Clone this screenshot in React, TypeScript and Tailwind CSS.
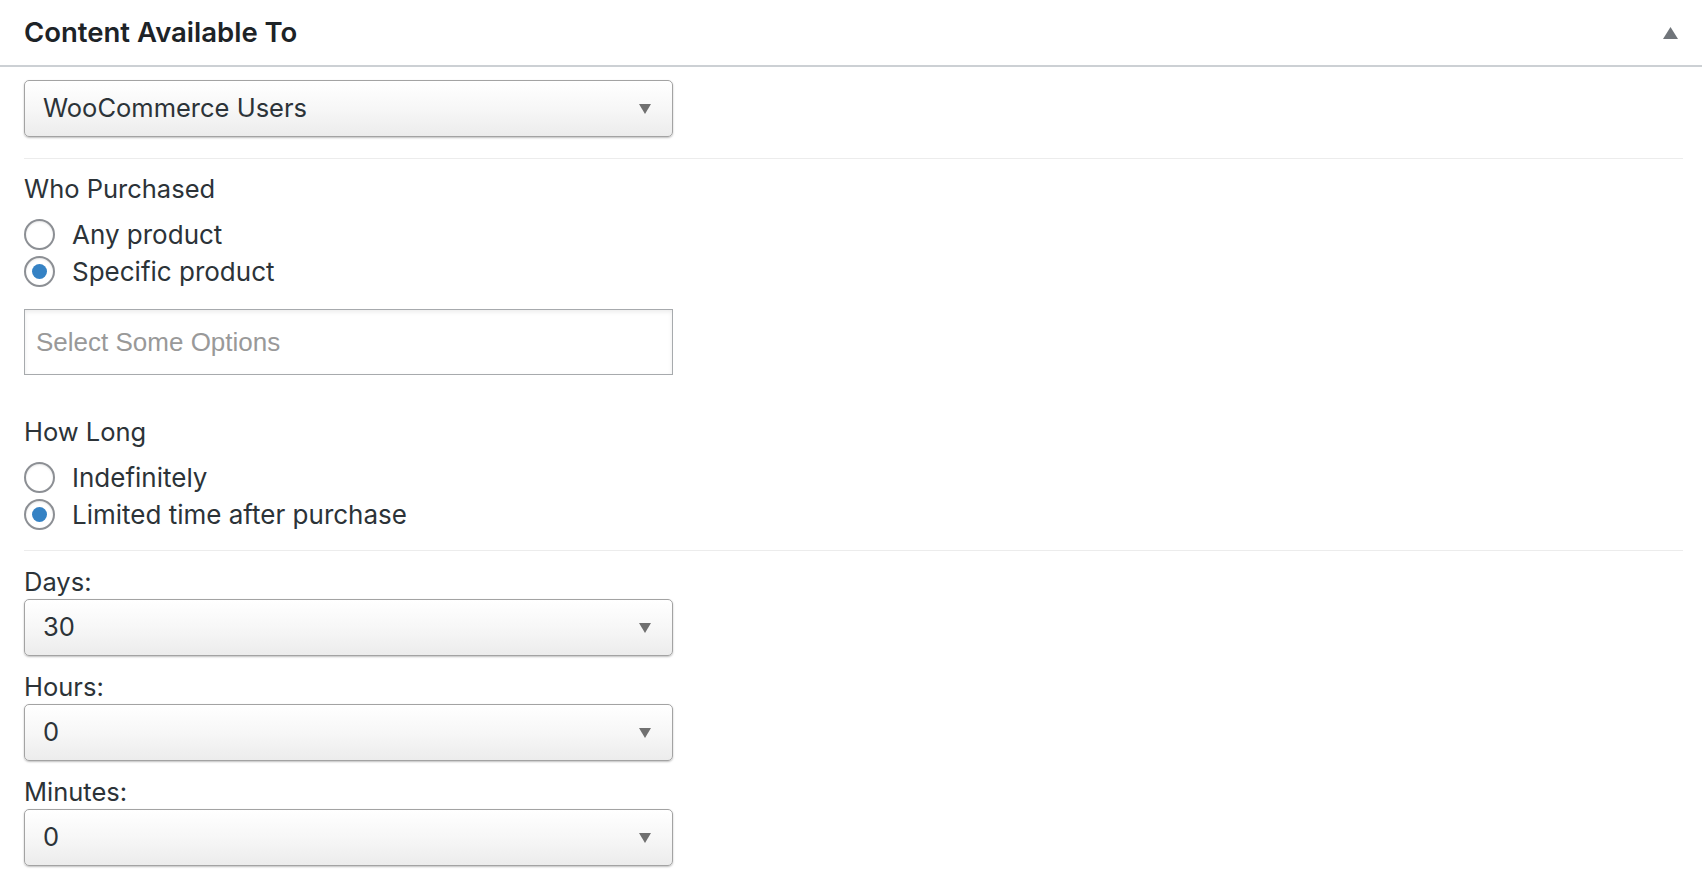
import React, { useState } from 'react';

const bodyFont = { fontFamily: 'Inter, "Noto Sans", sans-serif' };

const SelectBox: React.FC<{ value: string }> = ({ value }) => (
  <div className="relative flex h-[57px] w-[649px] items-center rounded-[5px] border border-[#a3a3a3] bg-gradient-to-b from-white via-[#f7f7f7] to-[#ececec] pl-[18px] pr-[21px] shadow-[0_1px_2px_rgba(0,0,0,0.25)]">
    <span className="flex-1 text-[25.5px] text-[#2c3338]">{value}</span>
    <svg width="12" height="10" viewBox="0 0 12 10" className="shrink-0">
      <path d="M0 0 H12 L6 10 Z" fill="#707070" />
    </svg>
  </div>
);

const Radio: React.FC<{ label: string; checked: boolean; onClick: () => void }> = ({ label, checked, onClick }) => (
  <button type="button" onClick={onClick} className="flex h-[37px] items-center gap-[17px] text-left">
    <span className="flex h-[31px] w-[31px] items-center justify-center rounded-full border-2 border-[#8c8f94] bg-white shadow-[inset_0_1px_2px_rgba(0,0,0,0.1)]">
      {checked && <span className="h-[15px] w-[15px] rounded-full bg-[#3582c4]" />}
    </span>
    <span className="text-[26px] text-[#2c3338]">{label}</span>
  </button>
);

const App: React.FC = () => {
  const [who, setWho] = useState('specific');
  const [howLong, setHowLong] = useState('limited');

  return (
    <div className="min-h-screen w-full bg-white" style={bodyFont}>
      <div className="flex h-[67px] items-center justify-between border-b-2 border-[#ccd0d4] pl-[24px] pr-[24px]">
        <h2 className="text-[27.5px] font-semibold text-[#1d2327]">Content Available To</h2>
        <svg width="15" height="12" viewBox="0 0 15 12">
          <path d="M7.5 0 L15 12 H0 Z" fill="#70757a" />
        </svg>
      </div>

      <div className="pl-[24px] pr-[19px]">
        <div className="pt-[13px]">
          <SelectBox value="WooCommerce Users" />
        </div>
        <div className="mt-[21px] border-t border-[#ececec]" />

        <div className="mt-[13px] text-[25.5px] leading-[34px] text-[#2c3338]">Who Purchased</div>
        <div className="mt-[10px] flex flex-col">
          <Radio label="Any product" checked={who === 'any'} onClick={() => setWho('any')} />
          <Radio label="Specific product" checked={who === 'specific'} onClick={() => setWho('specific')} />
        </div>
        <div className="mt-[19px] flex h-[66px] w-[649px] items-center border border-[#a7aaad] bg-white pl-[11px] shadow-[inset_0_2px_4px_rgba(0,0,0,0.08)]">
          <span className="text-[26px] text-[#999]" style={{ fontFamily: '"Liberation Sans", Arial, sans-serif' }}>
            Select Some Options
          </span>
        </div>

        <div className="mt-[40px] text-[25.5px] leading-[34px] text-[#2c3338]">How Long</div>
        <div className="mt-[10px] flex flex-col">
          <Radio label="Indefinitely" checked={howLong === 'indef'} onClick={() => setHowLong('indef')} />
          <Radio label="Limited time after purchase" checked={howLong === 'limited'} onClick={() => setHowLong('limited')} />
        </div>
        <div className="mt-[17px] border-t border-[#ececec]" />

        <div className="mt-[14px] text-[25.5px] leading-[34px] text-[#2c3338]">Days:</div>
        <SelectBox value="30" />
        <div className="mt-[14px] text-[25.5px] leading-[34px] text-[#2c3338]">Hours:</div>
        <SelectBox value="0" />
        <div className="mt-[14px] text-[25.5px] leading-[34px] text-[#2c3338]">Minutes:</div>
        <SelectBox value="0" />
      </div>
    </div>
  );
};

export default App;
